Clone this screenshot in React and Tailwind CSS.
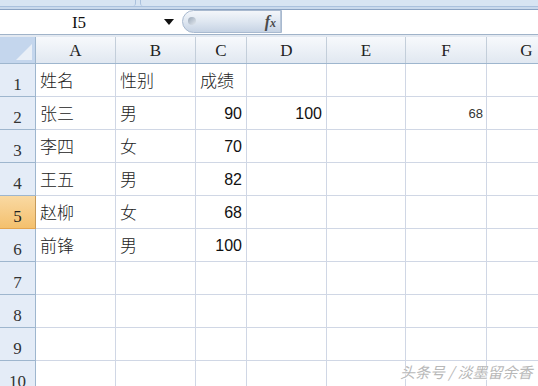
import React from "react";

const cols = [
  { l: "A", w: 80 },
  { l: "B", w: 80 },
  { l: "C", w: 51 },
  { l: "D", w: 80 },
  { l: "E", w: 79 },
  { l: "F", w: 81 },
  { l: "G", w: 80 },
];

const data = {
  1: { A: "姓名", B: "性别", C: "成绩" },
  2: { A: "张三", B: "男", C: "90", D: "100", F: "68" },
  3: { A: "李四", B: "女", C: "70" },
  4: { A: "王五", B: "男", C: "82" },
  5: { A: "赵柳", B: "女", C: "68" },
  6: { A: "前锋", B: "男", C: "100" },
};

const cjk = { fontFamily: '"Noto Sans CJK SC", sans-serif' };
const serif = { fontFamily: '"Liberation Serif", "DejaVu Serif", serif' };
const sans = { fontFamily: '"Liberation Sans", Arial, sans-serif' };

function Cell({ v, w, col, row }) {
  const isNum = v !== undefined && /^\d+$/.test(v);
  const small = col === "F" && row === 2;
  return (
    <div
      className="shrink-0 h-full border-r border-b border-[#d0d7e5] flex items-center overflow-hidden"
      style={{ width: w }}
    >
      {v !== undefined && (
        <div
          className={
            "w-full " +
            (isNum
              ? small
                ? "text-right pr-[3px] pt-[2px] text-[13px] text-[#333]"
                : "text-right pr-[4px] pt-[2px] text-[16px] text-[#111]"
              : "text-left pl-[4px] text-[17px] font-light text-[#222]")
          }
          style={isNum ? sans : cjk}
        >
          {v}
        </div>
      )}
    </div>
  );
}

export default function App() {
  const rows = [1, 2, 3, 4, 5, 6, 7, 8, 9, 10];
  return (
    <div className="relative w-[538px] h-[386px] overflow-hidden bg-white">
      {/* top ribbon strip */}
      <div className="h-[7px] bg-[#d7e4f2] flex border-b border-[#aac1dd]">
        <div className="w-[136px] border-r border-[#aac1dd] rounded-br-[3px]" />
        <div className="w-[4px]" />
        <div className="flex-1 border-l border-[#aac1dd] rounded-bl-[3px]" />
      </div>
      <div className="h-[3px] bg-[#c9d9ec] border-b border-[#8aa3c3]" />
      {/* formula bar */}
      <div className="h-[25px] flex bg-white border-b border-[#a0b3c9]">
        <div className="w-[182px] flex items-center relative">
          <div className="flex-1 text-center text-[17px] text-[#111] pr-[24px] leading-none" style={serif}>
            I5
          </div>
          <svg className="absolute left-[164px] top-[9px]" width="10" height="6" viewBox="0 0 10 6">
            <path d="M0 0 H10 L5 6 Z" fill="#111" />
          </svg>
        </div>
        <div className="w-[100px] h-[23px] rounded-l-full bg-gradient-to-b from-[#f3f6fa] via-[#dfe7f1] to-[#c6d3e4] border border-[#a8b9cf] flex items-center relative">
          <div className="absolute left-[5px] top-[6px] w-[8px] h-[8px] rounded-full bg-gradient-to-br from-[#9aa8b8] to-[#e3e9f0]" />
          <div className="ml-auto w-[1px] h-full bg-[#b8c6d8]" />
          <span
            className="absolute right-[5px] top-[1px] italic font-bold text-[16px] text-[#4a4a4a] leading-[20px]"
            style={serif}
          >
            f<span className="text-[12px]">x</span>
          </span>
        </div>
        <div className="flex-1 bg-white" />
      </div>
      <div className="h-[2px] bg-[#e3e9f1]" />
      {/* column header row */}
      <div className="h-[27px] flex border-b border-[#9eb6ce]">
        <div className="w-[36px] shrink-0 bg-[#c4d6ed] border-r border-[#9eb6ce] relative">
          <svg className="absolute right-[3px] bottom-[3px]" width="16" height="16" viewBox="0 0 16 16">
            <path d="M16 0 V16 H0 Z" fill="#e9eff7" />
          </svg>
        </div>
        {cols.map((c) => (
          <div
            key={c.l}
            className="shrink-0 h-full bg-gradient-to-b from-[#f7f9fc] to-[#e1e8f1] border-r border-[#c3ceda] flex items-center justify-center text-[17px] text-[#222] leading-none"
            style={{ width: c.w, ...serif }}
          >
            {c.l}
          </div>
        ))}
      </div>
      {/* rows */}
      {rows.map((r) => (
        <div key={r} className="h-[33px] flex">
          <div
            className={
              "w-[36px] shrink-0 border-r border-b flex items-end justify-center pb-[3px] text-[17px] leading-none " +
              (r === 5
                ? "bg-gradient-to-b from-[#f9d9a2] to-[#f4c06d] border-[#e5a54f] border-r-[#c59a5a] text-[#222]"
                : "bg-[#e4ecf7] border-[#9eb6ce] text-[#333]")
            }
            style={serif}
          >
            {r}
          </div>
          {cols.map((c) => (
            <Cell key={c.l} w={c.w} col={c.l} row={r} v={data[r] ? data[r][c.l] : undefined} />
          ))}
        </div>
      ))}
      {/* watermark */}
      <div
        className="absolute left-[400px] top-[364px] text-[15px] italic text-[#b8b8b8] leading-none whitespace-nowrap"
        style={{ ...cjk, textShadow: "0 0 1px #fff, 1px 1px 0 #fff" }}
      >
        头条号 / 淡墨留余香
      </div>
    </div>
  );
}
